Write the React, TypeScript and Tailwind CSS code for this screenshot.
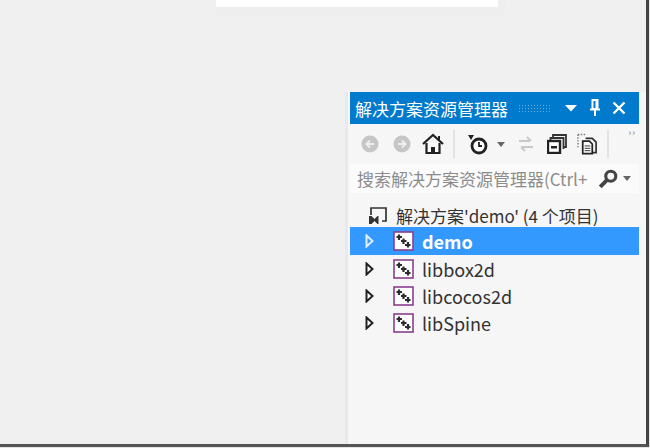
import React from 'react';

const font = "font-['Noto_Sans_CJK_SC','Noto_Sans',sans-serif]";

const ProjectIcon: React.FC = () => (
  <svg width="21" height="20" viewBox="0 0 21 20" className="shrink-0">
    <rect x="1" y="1" width="19" height="18" fill="#fff" stroke="#8a3f8f" strokeWidth="1.600" />
    <path d="M3.500 6h5.500M6 3.500v5.500M8 10h5.500M10.500 7.500v5.500M12 14h5.500M15 11v5.500" stroke="#2c2c2c" strokeWidth="2.200" fill="none" />
  </svg>
);

const Arrow: React.FC<{ light?: boolean }> = ({ light }) => (
  <svg width="9" height="14" viewBox="0 0 9 14" className="shrink-0">
    <path d="M1.500 1.500 7.500 7l-6 5.500z" fill={light ? '#3399ff' : '#fff'} stroke={light ? '#e0f0ff' : '#222'} strokeWidth="2" />
  </svg>
);

const NavCircle: React.FC<{ dir: 'l' | 'r' }> = ({ dir }) => (
  <svg width="18" height="18" viewBox="0 0 18 18">
    <circle cx="9" cy="9" r="8.500" fill="#c6c6c6" />
    <path d={dir === 'l' ? 'M13 9H6M9 5.500 5.500 9 9 12.500' : 'M5 9h7M9 5.500 12.500 9 9 12.500'} stroke="#efefef" strokeWidth="2" fill="none" />
  </svg>
);

const rows = ['libbox2d', 'libcocos2d', 'libSpine'];

export default function App() {
  return (
    <div className={`${font} w-[650px] h-[448px] overflow-hidden flex flex-col bg-[#e4e4e4] pr-[1px] pb-[1px]`}>
      <div className="flex-1 min-h-0 flex bg-[#f0f0f1] border-r-[3px] border-b-[3px] border-r-[#444] border-b-[#555]">
        {/* editor area */}
        <div className="w-[345px] shrink-0 relative">
          <div className="absolute left-[216px] top-0 w-[289px] h-[15px] bg-[#eeeeee]">
            <div className="w-[282px] h-[7px] bg-white" />
          </div>
        </div>

        {/* solution explorer */}
        <div className="flex-1 flex flex-col">
          <div className="h-[92px] shrink-0" />
          <div className="flex-1 flex flex-col bg-[#f6f6f7] border-l-[3px] border-[#e8e8ee] pl-[2px] pr-[7px]">
            <div className="h-[32px] shrink-0 bg-[#007acc] flex items-center pl-[5px] pr-[3px] text-white">
              <span className="text-[17px] leading-none w-[153px] shrink-0 whitespace-nowrap">解决方案资源管理器</span>
              <div className="w-[34px] h-[8px] ml-[10px] shrink-0 opacity-40 bg-[radial-gradient(#fff_1px,transparent_1px)] bg-[length:3px_3px]" />
              <svg width="12" height="8" viewBox="0 0 12 8" className="ml-[13px] shrink-0">
                <path d="M0 1h12L6 7.500z" fill="#fff" />
              </svg>
              <svg width="10" height="18" viewBox="0 0 10 18" className="ml-[13px] shrink-0">
                <path d="M2.500 1h5v9h-5zM0 10.500h10M5 10.500V17M6.500 2v7" stroke="#fff" strokeWidth="2" fill="none" />
              </svg>
              <svg width="14" height="14" viewBox="0 0 14 14" className="ml-[12px] shrink-0">
                <path d="M1.500 1.500l11 11M12.500 1.500l-11 11" stroke="#fff" strokeWidth="2.400" />
              </svg>
            </div>

            <div className="h-[40px] shrink-0 relative flex items-center pl-[11px]">
              <NavCircle dir="l" />
              <div className="ml-[14px]"><NavCircle dir="r" /></div>
              <svg width="22" height="22" viewBox="0 0 22 22" className="ml-[11px]">
                <path d="M1 11 11 2l10 9" stroke="#222" strokeWidth="2.200" fill="none" />
                <path d="M4.500 10v10h13V10" stroke="#222" strokeWidth="2.200" fill="#fff" />
                <path d="M9 20v-6h4v6z" fill="#222" />
                <path d="M16 3h2v4h-2z" fill="#222" />
              </svg>
              <div className="w-[2px] h-[28px] bg-[#e2e2e2] ml-[9px]" />
              <svg width="22" height="22" viewBox="0 0 22 22" className="ml-[12px]">
                <path d="M1 2h6L4 7z" fill="#222" />
                <circle cx="12" cy="13" r="7" stroke="#222" strokeWidth="2.800" fill="#fff" />
                <path d="M12 9v4h3" stroke="#222" strokeWidth="1.800" fill="none" />
              </svg>
              <svg width="8" height="5" viewBox="0 0 8 5" className="ml-[8px]">
                <path d="M0 0h8L4 5z" fill="#666" />
              </svg>
              <svg width="18" height="18" viewBox="0 0 18 18" className="ml-[12px]">
                <path d="M2 6h11M10 2l4 4M16 12H5M8 16l-4-4" stroke="#c8c8c8" strokeWidth="2" fill="none" />
              </svg>
              <svg width="20" height="20" viewBox="0 0 20 20" className="ml-[12px]">
                <path d="M6 3.500V1h13v12h-3M3.500 6.500V4h13v11" stroke="#333" strokeWidth="1.800" fill="none" />
                <rect x="1" y="7" width="12" height="12" fill="#fff" stroke="#222" strokeWidth="2.400" />
                <path d="M4 12h6v2.500H4z" fill="#222" />
              </svg>
              <svg width="21" height="22" viewBox="0 0 22 22" className="ml-[10px]">
                <path d="M1 1h8M1 1v14" stroke="#777" strokeWidth="1.500" strokeDasharray="1.500 1.500" fill="none" />
                <path d="M9 5h7l4 4v11H13" stroke="#333" strokeWidth="1.800" fill="none" />
                <path d="M6 8h7l3 3v10H6z" stroke="#222" strokeWidth="1.800" fill="#fff" />
                <path d="M8 13h6M8 15.500h6M8 18h6" stroke="#333" />
              </svg>
              <div className="w-[2px] h-[28px] bg-[#e2e2e2] ml-[9px]" />
              <span className="absolute right-[3px] top-[4px] text-[9px] leading-none text-[#777] tracking-[1px]">››</span>
            </div>

            <div className="h-[29px] shrink-0 bg-[#fbfbfb] flex items-center pl-[7px] pr-[4px]">
              <span className="text-[17px] leading-none text-[#8c8c8c] whitespace-nowrap w-[241px] shrink-0">搜索解决方案资源管理器(Ctrl+</span>
              <svg width="20" height="20" viewBox="0 0 18 18" className="shrink-0">
                <circle cx="11.500" cy="6.500" r="4.500" stroke="#444" strokeWidth="2.800" fill="none" />
                <path d="M8 10 2 16" stroke="#444" strokeWidth="3.500" />
              </svg>
              <svg width="8" height="5" viewBox="0 0 8 5" className="ml-[5px] shrink-0">
                <path d="M0 0h8L4 5z" fill="#666" />
              </svg>
            </div>

            <div className="flex flex-col pt-[11px]">
              <div className="h-[23px] flex items-center pl-[18px] text-[#333]">
                <svg width="20" height="18" viewBox="0 0 20 18" className="shrink-0">
                  <path d="M3 8V1h15v13h-4" stroke="#333" strokeWidth="1.700" fill="none" />
                  <path d="M1 9h2.500l3 3 3-3h1v8h-1l-3-3-3 3H1z" fill="#333" />
                </svg>
                <span className="text-[17px] leading-none ml-[8px] whitespace-nowrap">解决方案'demo' (4 个项目)</span>
              </div>
              <div className="h-[28px] bg-[#3399ff] flex items-center pl-[15px] text-white">
                <Arrow light />
                <div className="ml-[19px]"><ProjectIcon /></div>
                <span className="ml-[8px] text-[18px] font-bold leading-none">demo</span>
              </div>
              {rows.map((name) => (
                <div key={name} className="h-[27px] flex items-center pl-[15px] text-[#333]">
                  <Arrow />
                  <div className="ml-[19px]"><ProjectIcon /></div>
                  <span className="ml-[8px] text-[18px] leading-none">{name}</span>
                </div>
              ))}
            </div>
          </div>
        </div>
      </div>
    </div>
  );
}
